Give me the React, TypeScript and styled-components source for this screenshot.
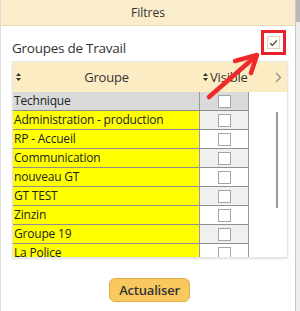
import React from 'react';
import styled, { createGlobalStyle } from 'styled-components';

const GlobalStyle = createGlobalStyle`
  html, body {
    margin: 0;
    padding: 0;
    background: #ffffff;
  }
  body {
    font-family: "Open Sans", "Noto Sans", Arial, sans-serif;
    color: #222;
  }
`;

const Page = styled.div`
  width: 300px;
  height: 311px;
  display: flex;
  overflow: hidden;
  background: #e9e9e9;
`;

const Panel = styled.div`
  position: relative;
  width: 296px;
  height: 311px;
  background: #ffffff;
  border-left: 1px solid #dcdcdc;
  border-right: 1px solid #c8c8c8;
  box-sizing: border-box;
  display: flex;
  flex-direction: column;
`;

const PanelHeader = styled.div`
  height: 26px;
  background: #f9edcb;
  border-bottom: 1px solid #eadcb2;
  box-sizing: border-box;
  display: flex;
  align-items: center;
  justify-content: center;
  font-size: 12px;
  font-weight: 500;
  color: #333;
`;

const Body = styled.div`
  padding: 4px 8px 0 11px;
  display: flex;
  flex-direction: column;
`;

const TitleRow = styled.div`
  display: flex;
  align-items: flex-end;
  justify-content: space-between;
  height: 31px;
`;

const Title = styled.div`
  font-size: 13.5px;
  letter-spacing: -0.25px;
  color: #333;
  line-height: 20px;
  padding-bottom: 3px;
`;

const Highlight = styled.div`
  width: 25px;
  height: 25px;
  border: 3px solid #e8202a;
  box-sizing: border-box;
  display: flex;
  align-items: center;
  justify-content: center;
  margin-right: 1px;
  margin-bottom: 6px;
`;

const MiniCheck = styled.div`
  width: 13px;
  height: 13px;
  border: 1px solid #ded6b4;
  background: #fffdf4;
  box-sizing: border-box;
  display: flex;
  align-items: center;
  justify-content: center;
`;

const TableFrame = styled.div`
  width: 276px;
  border: 1px solid #e6e6e6;
  box-shadow: 0 1px 2px rgba(0, 0, 0, 0.12);
  box-sizing: border-box;
`;

const HeaderRow = styled.div`
  height: 30px;
  display: grid;
  grid-template-columns: 187px 48px 1fr;
  background: #fcecc3;
  font-size: 13px;
  letter-spacing: -0.2px;
  color: #333;
`;

const HeaderCell = styled.div<{ $center?: boolean }>`
  position: relative;
  display: flex;
  align-items: center;
  justify-content: ${({ $center }) => ($center ? 'center' : 'flex-start')};
  white-space: nowrap;
  gap: 2px;
  padding-left: ${({ $center }) => ($center ? '0' : '3px')};
`;

const SortIcon = styled.span<{ $abs?: boolean }>`
  display: flex;
  ${({ $abs }) => ($abs ? 'position: absolute; left: 3px; top: 11px;' : '')}
`;

const Chevron = styled.div`
  display: flex;
  align-items: center;
  justify-content: flex-end;
  padding-right: 5px;
  color: #888;
`;

const TableBody = styled.div`
  display: flex;
  height: 165px;
`;

const Rows = styled.div`
  width: 235px;
  overflow: hidden;
  border-right: 1px solid #999;
  box-sizing: content-box;
`;

const Row = styled.div`
  display: grid;
  grid-template-columns: 187px 48px;
  height: 19px;
  border-bottom: 1px solid #8f8f8f;
  box-sizing: border-box;
`;

const NameCell = styled.div<{ $bg: string }>`
  background: ${({ $bg }) => $bg};
  border-right: 1px solid #999;
  font-size: 12px;
  letter-spacing: -0.2px;
  line-height: 18px;
  padding-left: 1px;
  white-space: nowrap;
  overflow: hidden;
  color: #222;
`;

const CheckCell = styled.div<{ $bg: string }>`
  background: ${({ $bg }) => $bg};
  display: flex;
  align-items: center;
  justify-content: center;
`;

const Box = styled.div`
  width: 13px;
  height: 13px;
  border: 1px solid #a5a5a5;
  background: #ffffff;
  box-sizing: border-box;
`;

const ScrollArea = styled.div`
  flex: 1;
  display: flex;
  justify-content: flex-end;
  padding: 20px 9px 0 0;
`;

const ScrollLine = styled.div`
  width: 2px;
  height: 96px;
  background: #9a9a9a;
`;

const Footer = styled.div`
  display: flex;
  justify-content: center;
  padding-top: 20px;
`;

const Button = styled.button`
  width: 81px;
  height: 24px;
  border: 1px solid #e2ab45;
  border-radius: 6px;
  background: #f9c95f;
  font-family: inherit;
  font-size: 13px;
  letter-spacing: -0.2px;
  font-weight: 600;
  color: #333;
  padding: 0;
  cursor: pointer;
`;

const ArrowLayer = styled.svg`
  position: absolute;
  left: 0;
  top: 0;
  pointer-events: none;
`;

const ScrollStub = styled.div`
  flex: 1;
  background: linear-gradient(#b9b9b9 0, #b9b9b9 22px, #eeeeee 22px);
`;

const groups = [
  'Administration - production',
  'RP - Accueil',
  'Communication',
  'nouveau GT',
  'GT TEST',
  'Zinzin',
  'Groupe 19',
  'La Police',
];

const Sort = () => (
  <svg width="5" height="8" viewBox="0 0 5 8">
    <path d="M2.5 0 L5 3 L0 3 Z M0 5 L5 5 L2.5 8 Z" fill="#333" />
  </svg>
);

const App: React.FC = () => {
  return (
    <>
      <GlobalStyle />
      <Page>
        <Panel>
          <PanelHeader>Filtres</PanelHeader>
          <Body>
            <TitleRow>
              <Title>Groupes de Travail</Title>
              <Highlight>
                <MiniCheck>
                  <svg width="9" height="8" viewBox="0 0 9 8">
                    <path d="M1.2 4.2 L3.4 6.3 L7.8 1.5" fill="none" stroke="#444" strokeWidth="1.2" />
                  </svg>
                </MiniCheck>
              </Highlight>
            </TitleRow>
            <TableFrame>
              <HeaderRow>
                <HeaderCell $center>
                  <SortIcon $abs>
                    <Sort />
                  </SortIcon>
                  Groupe
                </HeaderCell>
                <HeaderCell>
                  <SortIcon>
                    <Sort />
                  </SortIcon>
                  Visible
                </HeaderCell>
                <Chevron>
                  <svg width="7" height="11" viewBox="0 0 7 11">
                    <path d="M1 1 L5.5 5.5 L1 10" fill="none" stroke="#8a8a8a" strokeWidth="1.2" />
                  </svg>
                </Chevron>
              </HeaderRow>
              <TableBody>
                <Rows>
                  <Row>
                    <NameCell $bg="#d9d9d9">Technique</NameCell>
                    <CheckCell $bg="#dadada">
                      <Box />
                    </CheckCell>
                  </Row>
                  {groups.map((g, i) => (
                    <Row key={g}>
                      <NameCell $bg="#ffff00">{g}</NameCell>
                      <CheckCell $bg={i % 2 === 0 ? '#f0f0f0' : '#ffffff'}>
                        <Box />
                      </CheckCell>
                    </Row>
                  ))}
                </Rows>
                <ScrollArea>
                  <ScrollLine />
                </ScrollArea>
              </TableBody>
            </TableFrame>
            <Footer>
              <Button>Actualiser</Button>
            </Footer>
          </Body>
          <ArrowLayer width="296" height="311" viewBox="0 0 296 311">
            <g stroke="#ee2a2a" strokeWidth="4.5" strokeLinecap="round" strokeLinejoin="round" fill="none">
              <path d="M208 97 L255 56" />
              <path d="M234 61 L256 55 L250 73" />
            </g>
          </ArrowLayer>
        </Panel>
        <ScrollStub />
      </Page>
    </>
  );
};

export default App;
